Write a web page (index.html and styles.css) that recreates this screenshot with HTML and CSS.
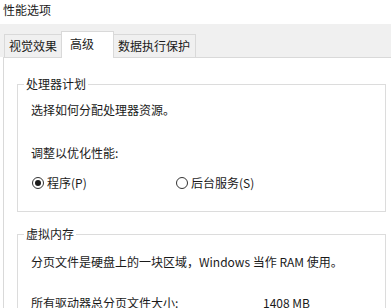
FILE: index.html
```html
<!DOCTYPE html>
<html lang="zh-CN">
<head>
<meta charset="utf-8">
<title>性能选项</title>
<link rel="stylesheet" href="styles.css">
</head>
<body>
  <div class="title">性能选项</div>
  <div class="tabs">
    <div class="tab tab-visual">视觉效果</div>
    <div class="tab tab-active">高级</div>
    <div class="tab tab-dep">数据执行保护</div>
  </div>
  <div class="panel">
    <fieldset class="group group-cpu">
      <legend>处理器计划</legend>
      <p class="line first">选择如何分配处理器资源。</p>
      <p class="line adjust">调整以优化性能:</p>
      <div class="radios">
        <label class="radio"><span class="dot checked"></span>程序(P)</label>
        <label class="radio"><span class="dot"></span>后台服务(S)</label>
      </div>
    </fieldset>
    <fieldset class="group group-mem">
      <legend>虚拟内存</legend>
      <p class="line first">分页文件是硬盘上的一块区域，Windows 当作 RAM 使用。</p>
      <div class="size-row">
        <span>所有驱动器总分页文件大小:</span>
        <span>1408 MB</span>
      </div>
    </fieldset>
  </div>
</body>
</html>
```

FILE: styles.css
```css
html, body {
  margin: 0;
  padding: 0;
}
body {
  width: 391px;
  height: 308px;
  overflow: hidden;
  background: #ffffff;
  font-family: "Noto Sans CJK SC", "Noto Sans", sans-serif;
  font-size: 12px;
  line-height: 16px;
  color: #1a1a1a;
}
.title {
  height: 24px;
  line-height: 20px;
  padding-left: 3px;
}
.tabs {
  box-sizing: border-box;
  height: 33px;
  background: #f0f0f0;
  display: flex;
  align-items: flex-end;
  padding-left: 4px;
}
.tab {
  box-sizing: border-box;
  height: 23px;
  line-height: 22px;
  border: 1px solid #d9d9d9;
  border-bottom: none;
  background: #f0f0f0;
  white-space: nowrap;
}
.tab-visual {
  width: 58px;
  padding-left: 4px;
}
.tab-active {
  position: relative;
  z-index: 1;
  width: 53px;
  height: 27px;
  line-height: 24px;
  margin-left: -1px;
  margin-bottom: -1px;
  padding-left: 8px;
  background: #ffffff;
}
.tab-dep {
  width: 83px;
  margin-left: -1px;
  padding-left: 4px;
}
.panel {
  border-top: 1px solid #d9d9d9;
  border-left: 1px solid #d9d9d9;
  margin-left: 3px;
  padding: 18px 0 0 13px;
  background: #ffffff;
}
.group {
  box-sizing: border-box;
  width: 369px;
  margin: 0;
  padding: 0 0 0 13px;
  border: 1px solid #dcdcdc;
}
.group legend {
  padding: 0 2px;
  margin-left: -7px;
  line-height: 16px;
}
.group-cpu {
  padding-bottom: 20px;
}
.group-mem {
  margin-top: 14px;
  padding-bottom: 20px;
}
.line {
  margin: 0;
}
.group-cpu .first {
  margin-top: 10px;
}
.adjust {
  margin-top: 27px;
}
.radios {
  margin-top: 14px;
  display: grid;
  grid-template-columns: 144px auto;
}
.radio {
  display: flex;
  align-items: center;
}
.dot {
  box-sizing: border-box;
  width: 12px;
  height: 12px;
  margin-left: 1px;
  margin-right: 3px;
  border: 1px solid #333333;
  border-radius: 50%;
  display: flex;
  align-items: center;
  justify-content: center;
}
.dot.checked::after {
  content: "";
  width: 6px;
  height: 6px;
  border-radius: 50%;
  background: #1a1a1a;
}
.group-mem .first {
  margin-top: 12px;
}
.size-row {
  margin-top: 25px;
  display: grid;
  grid-template-columns: 232px auto;
}
```
